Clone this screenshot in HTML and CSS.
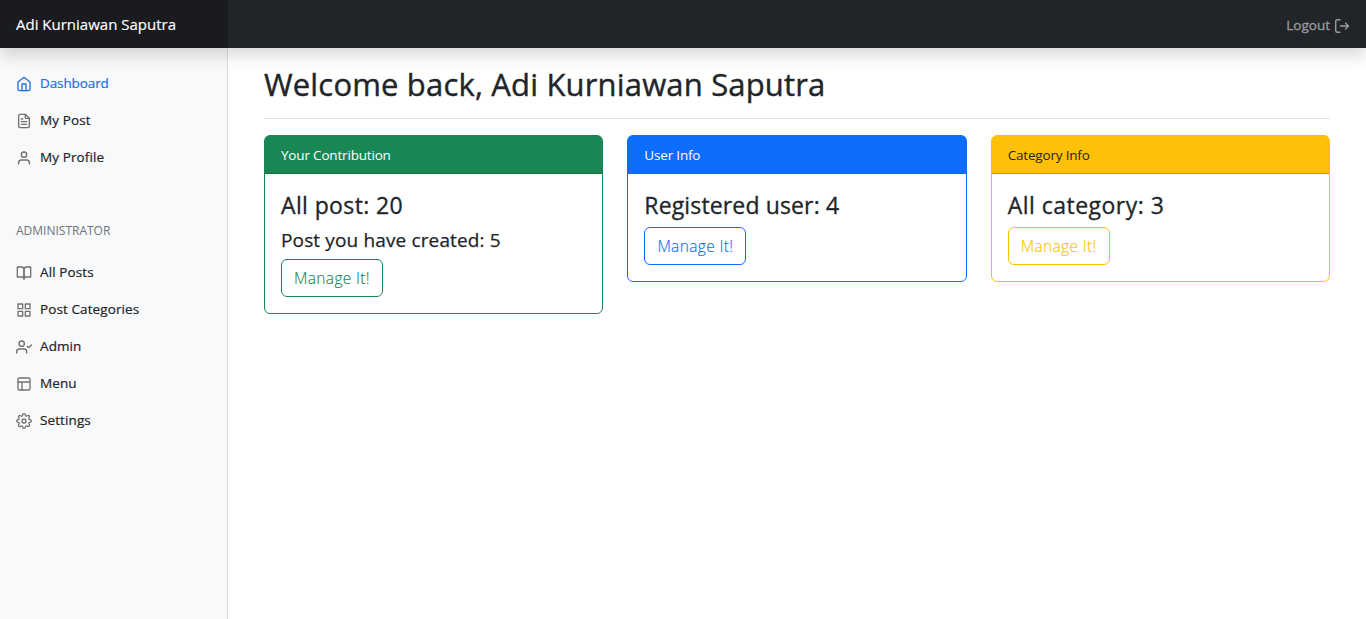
FILE: index.html
```html
<!DOCTYPE html>
<html lang="en">
<head>
<meta charset="utf-8">
<title>Dashboard</title>
<link rel="stylesheet" href="styles.css">
</head>
<body>
<header class="topbar">
  <a class="brand"><span class="brand-text">Adi Kurniawan Saputra</span></a>
  <a class="logout"><span class="logout-text">Logout</span>
    <svg class="logout-icon" viewBox="0 0 16 16" fill="none" stroke="currentColor" stroke-width="1.4" stroke-linecap="round" stroke-linejoin="round"><path d="M6 1.700H3.200Q1.700 1.700 1.700 3.200v9.600q0 1.500 1.500 1.500H6M6.500 8h8M11.500 5l3 3-3 3"/></svg>
  </a>
</header>
<div class="layout">
  <nav class="sidebar">
    <ul class="menu">
      <li class="item active"><svg class="icon" viewBox="0 0 24 24"><path d="M3 9l9-7 9 7v11a2 2 0 0 1-2 2H5a2 2 0 0 1-2-2z"/><path d="M9 22V12h6v10"/></svg><span>Dashboard</span></li>
      <li class="item"><svg class="icon" viewBox="0 0 24 24"><path d="M14 2H6a2 2 0 0 0-2 2v16a2 2 0 0 0 2 2h12a2 2 0 0 0 2-2V8z"/><path d="M14 2v6h6M16 13H8M16 17H8M10 9H8"/></svg><span>My Post</span></li>
      <li class="item"><svg class="icon" viewBox="0 0 24 24"><path d="M20 21v-2a4 4 0 0 0-4-4H8a4 4 0 0 0-4 4v2"/><circle cx="12" cy="7" r="4"/></svg><span>My Profile</span></li>
    </ul>
    <h6 class="heading"><span>ADMINISTRATOR</span></h6>
    <ul class="menu">
      <li class="item"><svg class="icon" viewBox="0 0 24 24"><path d="M2 3h6a4 4 0 0 1 4 4v14a3 3 0 0 0-3-3H2z"/><path d="M22 3h-6a4 4 0 0 0-4 4v14a3 3 0 0 1 3-3h7z"/></svg><span>All Posts</span></li>
      <li class="item"><svg class="icon" viewBox="0 0 24 24"><path d="M3 3h7v7H3zM14 3h7v7h-7zM14 14h7v7h-7zM3 14h7v7H3z"/></svg><span>Post Categories</span></li>
      <li class="item"><svg class="icon" viewBox="0 0 24 24"><path d="M16 21v-2a4 4 0 0 0-4-4H5a4 4 0 0 0-4 4v2"/><circle cx="8.5" cy="7" r="4"/><path d="M17 11l2 2 4-4"/></svg><span>Admin</span></li>
      <li class="item"><svg class="icon" viewBox="0 0 24 24"><rect x="3" y="3" width="18" height="18" rx="2"/><path d="M3 9h18M9 21V9"/></svg><span>Menu</span></li>
      <li class="item"><svg class="icon" viewBox="0 0 24 24"><circle cx="12" cy="12" r="3"/><path d="M19.4 15a1.65 1.65 0 0 0 .33 1.82l.06.06a2 2 0 0 1 0 2.830 2 2 0 0 1-2.830 0l-.06-.06a1.65 1.65 0 0 0-1.820-.33 1.65 1.65 0 0 0-1 1.510V21a2 2 0 0 1-2 2 2 2 0 0 1-2-2v-.09A1.65 1.65 0 0 0 9 19.400a1.65 1.65 0 0 0-1.820.33l-.06.06a2 2 0 0 1-2.830 0 2 2 0 0 1 0-2.830l.06-.06a1.65 1.65 0 0 0 .33-1.820 1.65 1.65 0 0 0-1.510-1H3a2 2 0 0 1-2-2 2 2 0 0 1 2-2h.09A1.65 1.65 0 0 0 4.600 9a1.65 1.65 0 0 0-.33-1.820l-.06-.06a2 2 0 0 1 0-2.830 2 2 0 0 1 2.830 0l.06.06a1.65 1.65 0 0 0 1.820.33H9a1.65 1.65 0 0 0 1-1.510V3a2 2 0 0 1 2-2 2 2 0 0 1 2 2v.09a1.65 1.65 0 0 0 1 1.510 1.65 1.65 0 0 0 1.820-.33l.06-.06a2 2 0 0 1 2.830 0 2 2 0 0 1 0 2.830l-.06.06a1.65 1.65 0 0 0-.33 1.820V9a1.65 1.65 0 0 0 1.510 1H21a2 2 0 0 1 2 2 2 2 0 0 1-2 2h-.09a1.65 1.65 0 0 0-1.510 1z"/></svg><span>Settings</span></li>
    </ul>
  </nav>
  <main class="content">
    <h1 class="title"><span>Welcome back, Adi Kurniawan Saputra</span></h1>
    <div class="cards">
      <section class="card success">
        <div class="card-header"><span>Your Contribution</span></div>
        <div class="card-body"><h4 class="stat"><span>All post: 20</span></h4><h5 class="substat"><span>Post you have created: 5</span></h5><a class="btn"><span>Manage It!</span></a></div>
      </section>
      <section class="card primary">
        <div class="card-header"><span>User Info</span></div>
        <div class="card-body"><h4 class="stat"><span>Registered user: 4</span></h4><a class="btn"><span>Manage It!</span></a></div>
      </section>
      <section class="card warning">
        <div class="card-header"><span>Category Info</span></div>
        <div class="card-body"><h4 class="stat"><span>All category: 3</span></h4><a class="btn"><span>Manage It!</span></a></div>
      </section>
    </div>
  </main>
</div>
</body>
</html>
```
FILE: styles.css
```css
* { box-sizing: border-box; }
body {
  margin: 0;
  height: 619px;
  display: flex;
  flex-direction: column;
  overflow: hidden;
  background: #fff;
  color: #212529;
  font: 400 16px/1.5 "Open Sans", "Noto Sans", sans-serif;
}
h1, h4, h5, h6, ul { margin: 0; padding: 0; font-weight: 500; }
.topbar {
  position: relative;
  z-index: 2;
  flex: none;
  height: 48px;
  display: flex;
  align-items: center;
  justify-content: space-between;
  background: #212529;
  box-shadow: 0 8px 16px rgba(0, 0, 0, .15);
}
.brand {
  width: 228px;
  height: 48px;
  padding: 1px 16px 0;
  display: flex;
  align-items: center;
  background: #1a1b1f;
  color: #fff;
  font-size: 15px;
  white-space: nowrap;
  -webkit-text-stroke: .15px;
}
.logout {
  display: flex;
  align-items: center;
  gap: 4px;
  padding: 3px 16px 0 0;
  color: #9b9c9e;
  font-size: 13.5px;
  font-weight: 500;
  -webkit-text-stroke: .3px;
}
.logout-icon { width: 16px; height: 16px; }
.layout { flex: 1; display: flex; min-height: 0; }
.sidebar {
  width: 228px;
  flex: none;
  padding-top: 17px;
  background: #f8f9fb;
  border-right: 1px solid #dcdee0;
}
.menu { list-style: none; }
.item {
  display: flex;
  align-items: center;
  gap: 8px;
  height: 37px;
  padding-left: 16px;
  font-size: 13.5px;
  font-weight: 500;
  letter-spacing: .1px;
  -webkit-text-stroke: .2px;
}
.active { color: #2470dc; letter-spacing: -.1px; }
.icon {
  width: 16px;
  height: 16px;
  fill: none;
  stroke: #727272;
  stroke-width: 2;
  stroke-linecap: round;
  stroke-linejoin: round;
}
.active .icon { stroke: #2470dc; }
.heading {
  height: 78px;
  padding: 44px 16px 0;
  color: #6c757d;
  font-size: 12px;
  line-height: 21px;
  font-weight: 400;
}
.content { flex: 1; padding: 16px 36px 0; }
.title {
  height: 55px;
  border-bottom: 1px solid #dee2e6;
  font-size: 31px;
  line-height: 41px;
  letter-spacing: .17px;
  -webkit-text-stroke: .4px;
}
.cards {
  display: grid;
  grid-template-columns: repeat(3, 1fr);
  align-items: start;
  gap: 24px;
  padding-top: 16px;
}
.card { border: 1px solid var(--tone); border-radius: 6px; background: #fff; }
.card-header {
  height: 38px;
  padding: 0 16px;
  border-bottom: 1px solid var(--line);
  border-radius: 4px 4px 0 0;
  background: var(--tone);
  color: #fff;
  font-size: 13.5px;
  line-height: 38px;
  letter-spacing: -.18px;
}
.success { --tone: #198754; --line: #14703f; }
.primary { --tone: #0d6efd; --line: #0d6efd; }
.warning { --tone: #ffc107; --line: #c6930a; }
.warning .card-header { color: #212529; }
.card-body { padding: 16px; }
.stat {
  height: 29px;
  margin-bottom: 8px;
  font-size: 23px;
  line-height: 31px;
  letter-spacing: .38px;
  -webkit-text-stroke: .3px;
}
.primary .stat { letter-spacing: .14px; }
.warning .stat { letter-spacing: .48px; }
.substat {
  height: 24px;
  margin-bottom: 8px;
  font-size: 19px;
  line-height: 26px;
  letter-spacing: .14px;
  -webkit-text-stroke: .25px;
}
.btn {
  width: 102px;
  height: 38px;
  padding-top: 2px;
  display: flex;
  align-items: center;
  justify-content: center;
  border: 1px solid var(--tone);
  border-radius: 6px;
  color: var(--tone);
  font-size: 15.5px;
  font-weight: 300;
  letter-spacing: .35px;
  -webkit-text-stroke: .15px;
}
```
